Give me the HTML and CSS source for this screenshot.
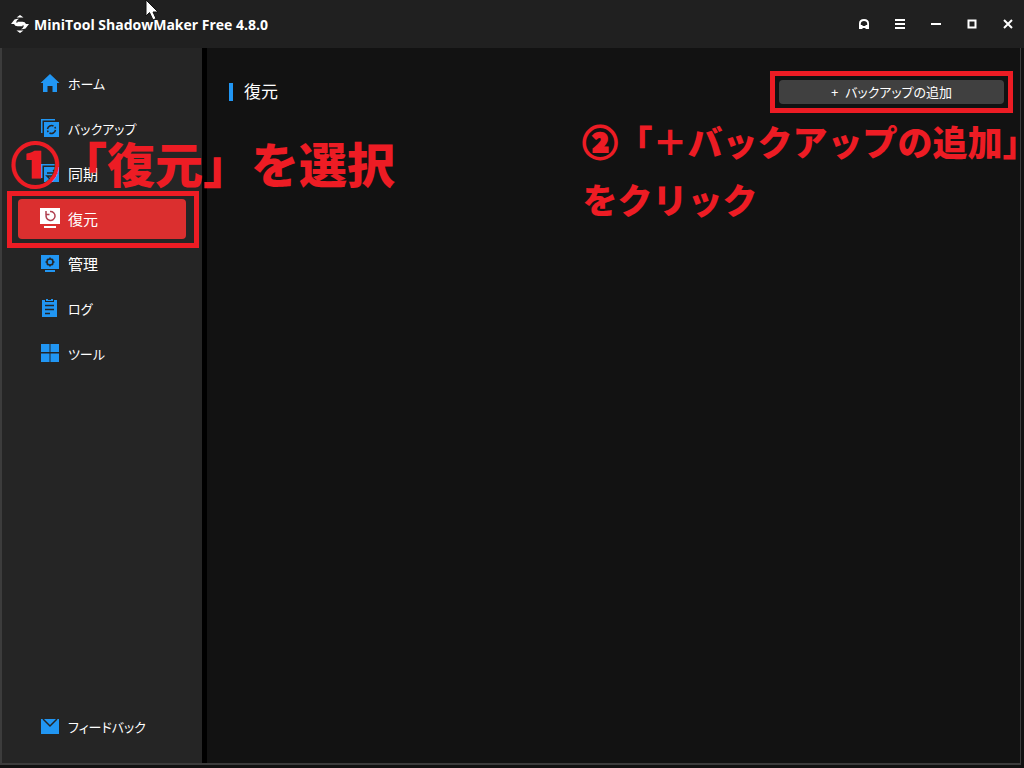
FILE: index.html
```html
<!DOCTYPE html>
<html lang="ja">
<head>
    <meta charset="UTF-8">
    <meta name="viewport" content="width=device-width, initial-scale=1.0">
    <title>MiniTool ShadowMaker Free 4.8.0</title>
    <link rel="stylesheet" href="styles.css">
</head>
<body>

    <header class="titlebar">
        <svg class="logo" viewBox="0 0 18 18" aria-hidden="true">
            <path d="M9 0l3.500 2.500H5.500zM9 18l3.500-2.500H5.500z"/>
            <path d="M0 9l3.500-4.500Q6 3.500 8 3.800 5.500 5 5 7.500h1.500Q7 9 9 8.800h2.500v2.500H7Q4 11.500 3 9z"/>
            <path d="M18 9l-3.500 4.500Q12 14.500 10 14.200 12.500 13 13 10.500h-1.500Q11 9 9 9.200H6.500V6.700H11Q14 6.500 15 9z"/>
        </svg>
        <h1>MiniTool ShadowMaker Free 4.8.0</h1>
        <div class="window-buttons">
            <button type="button" aria-label="サポート">
                <svg viewBox="0 0 12 12"><path d="M1 11V5.500Q1 1 6 1t5 4.500V11H7.500V7h1.700V5.500Q9 3 6 3T2.800 5.500V7h1.700v4z"/><path d="M4 8h4v2H4z"/></svg>
            </button>
            <button type="button" aria-label="メニュー">
                <svg viewBox="0 0 12 12"><path d="M1 1h10v2H1zM1 5h10v2H1zM1 9h10v2H1z"/></svg>
            </button>
            <button type="button" aria-label="最小化">
                <svg viewBox="0 0 12 12"><path d="M1 5h10v2H1z"/></svg>
            </button>
            <button type="button" aria-label="最大化">
                <svg viewBox="0 0 12 12"><path fill-rule="evenodd" d="M1.500 1.500h9v9h-9zM3.500 3.500v5h5v-5z"/></svg>
            </button>
            <button type="button" aria-label="閉じる">
                <svg viewBox="0 0 12 12"><path d="M2 2l8 8M10 2l-8 8" stroke="#fff" stroke-width="2"/></svg>
            </button>
        </div>
    </header>

    <div class="window">
        <nav class="sidebar">
            <a href="#home" class="nav-item kana">
                <svg viewBox="0 0 20 20"><path d="M10 1l9.500 9H17v9h-4.500v-6h-5v6H3v-9H.5z"/></svg>
                ホーム
            </a>
            <a href="#backup" class="nav-item kana">
                <svg viewBox="0 0 20 20">
                    <path d="M1 1h14v1.500H2.500V15H1z"/><path d="M4 4h15v15H4z"/>
                    <path class="cut" d="M7.500 11a4.200 4.200 0 0 1 6-3M15.500 12a4.200 4.200 0 0 1-6 3M15.500 10.500a4 4 0 0 0-.8-1.500M7.500 12.500a4 4 0 0 0 .8 1.500"/>
                </svg>
                バックアップ
            </a>
            <a href="#sync" class="nav-item">
                <svg viewBox="0 0 20 20">
                    <path d="M1 1h14v1.500H2.500V15H1z"/><path d="M4 4h15v15H4z"/>
                    <path class="cut" d="M7 10h9l-3-3M16 13H7l3 3"/>
                </svg>
                同期
            </a>
            <a href="#restore" class="nav-item active">
                <svg viewBox="0 0 22 22">
                    <path d="M1 1h20v16H1zM5 19h12v2H5z"/>
                    <path class="cut" d="M7.500 7A4.500 4.500 0 1 0 11 4.500M7 4v3.500h3.500"/>
                </svg>
                復元
            </a>
            <a href="#manage" class="nav-item">
                <svg viewBox="0 0 20 20">
                    <path d="M1 2h18v14H1zM5 17h10v2H5z"/>
                    <circle class="cut" cx="10" cy="9" r="3"/>
                    <path class="cut" d="M10 4.500V6M10 12v1.500M5.500 9H7M13 9h1.500M7 6l1 1M12 11l1 1M13 6l-1 1M8 11l-1 1"/>
                </svg>
                管理
            </a>
            <a href="#log" class="nav-item kana">
                <svg viewBox="0 0 20 20">
                    <path d="M2 2h3v2h9V2h3v17H2zM6 1h2v1h3V1h2v2H6z"/>
                    <path class="cut" d="M5 7.500h9M5 11.500h9M5 15.500h5"/>
                </svg>
                ログ
            </a>
            <a href="#tools" class="nav-item kana">
                <svg viewBox="0 0 20 20"><path d="M1 1h8.500v8H1zM10.500 1H19v8h-8.500zM1 10.500h8.500V19H1zM10.500 10.500H19V19h-8.500z"/></svg>
                ツール
            </a>
            <a href="#feedback" class="nav-item kana feedback">
                <svg viewBox="0 0 20 20"><path d="M1 3h18v15H1z"/><path class="cut" d="M3 3l7 7 7-7"/></svg>
                フィードバック
            </a>
            <p class="note note-select"><span class="step">①</span>「復元」を選択</p>
        </nav>

        <main class="content">
            <div class="content-head">
                <h2>復元</h2>
                <button type="button" class="add-button">+&nbsp; バックアップの追加</button>
            </div>
            <p class="note note-click"><span class="step">②</span>「＋バックアップの追加<span class="half">」</span><br>をクリック</p>
        </main>
    </div>

    <svg class="cursor" viewBox="0 0 14 22" aria-hidden="true"><path d="M1 0v16l3.500-3.500L8 20l3-1.500L8 12h5z"/></svg>

</body>
</html>
```

FILE: styles.css
```css
* {
    box-sizing: border-box;
}

body {
    font-family: "Noto Sans", "Noto Sans CJK JP", sans-serif;
    background-color: #111;
    color: #fff;
    margin: 0;
    min-height: 100vh;
    display: flex;
    flex-direction: column;
    position: relative;
    overflow: hidden;
}

svg {
    fill: #fff;
    display: block;
}

/* Title bar */
.titlebar {
    height: 48px;
    padding: 0 10px 0 11px;
    display: flex;
    align-items: center;
    background-color: #202020;
}

.logo {
    width: 18px;
    height: 18px;
    margin-right: 5px;
}

h1 {
    flex: 1;
    margin: 0;
    font-family: "Open Sans", sans-serif;
    font-size: 14px;
    font-weight: 700;
}

.window-buttons {
    display: flex;
    gap: 24px;
}

.window-buttons button {
    width: 12px;
    height: 12px;
    padding: 0;
    border: none;
    background: none;
    cursor: pointer;
}

/* Window body */
.window {
    flex: 1;
    display: flex;
    margin: 0 3px 3px 0;
    border: 2px solid #3c3c3c;
    border-width: 0 1px 2px 2px;
}

.sidebar {
    width: 205px;
    padding: 16px;
    border-right: 5px solid #000;
    display: flex;
    flex-direction: column;
    gap: 5px;
    position: relative;
    background-color: #252525;
}

.nav-item {
    height: 40px;
    padding: 0 0 2px 22px;
    display: flex;
    align-items: center;
    gap: 8px;
    position: relative;
    border-radius: 4px;
    color: #fff;
    font-size: 15px;
    font-feature-settings: "palt";
    text-decoration: none;
}

.kana {
    font-size: 13px;
}

.nav-item svg {
    width: 20px;
    height: 20px;
    fill: #2196f3;
}

.nav-item .cut {
    fill: none;
    stroke: #252525;
    stroke-width: 1.5;
}

.active {
    background-color: #db2f2f;
}

.nav-item.active svg {
    width: 22px;
    height: 22px;
    margin: 0 -1px;
    fill: #fff;
}

.nav-item.active .cut {
    stroke: #b04050;
}

/* Red frames round the items to click */
.active::after,
.add-button::after {
    content: "";
    position: absolute;
    border: 5px solid #ed1c24;
}

.active::after {
    inset: -8px -13px -9px -11px;
}

.add-button::after {
    inset: -9px;
}

.feedback {
    margin-top: auto;
}

/* Right side */
.content {
    flex: 1;
    padding: 32px 16px 16px 22px;
    position: relative;
    background-color: #121212;
}

.content-head {
    display: flex;
    align-items: center;
    justify-content: space-between;
}

h2 {
    margin: 0;
    padding-left: 11px;
    border-left: 4px solid #2196f3;
    font-size: 17px;
    font-weight: 400;
    line-height: 18px;
}

.add-button {
    width: 225px;
    height: 24px;
    padding: 0;
    border: none;
    border-radius: 4px;
    position: relative;
    background-color: #404040;
    color: #fff;
    font-family: inherit;
    font-size: 13px;
    font-feature-settings: "palt";
    line-height: 24px;
    cursor: pointer;
}

/* Step notes on top of the window */
.note {
    margin: 0;
    position: absolute;
    z-index: 1;
    color: #ed1c24;
    font-family: "Noto Sans CJK JP", sans-serif;
    font-weight: 900;
    white-space: nowrap;
}

.note-select {
    top: 85px;
    left: 9px;
    font-size: 48px;
    line-height: 58px;
}

.note-click {
    top: 64px;
    right: 0;
    font-size: 35px;
    line-height: 58px;
}

.step {
    -webkit-text-stroke: 2px #ed1c24;
}

.half {
    font-feature-settings: "halt";
}

.cursor {
    width: 14px;
    height: 22px;
    position: absolute;
    top: 0;
    left: 145px;
    stroke: #111;
}
```
